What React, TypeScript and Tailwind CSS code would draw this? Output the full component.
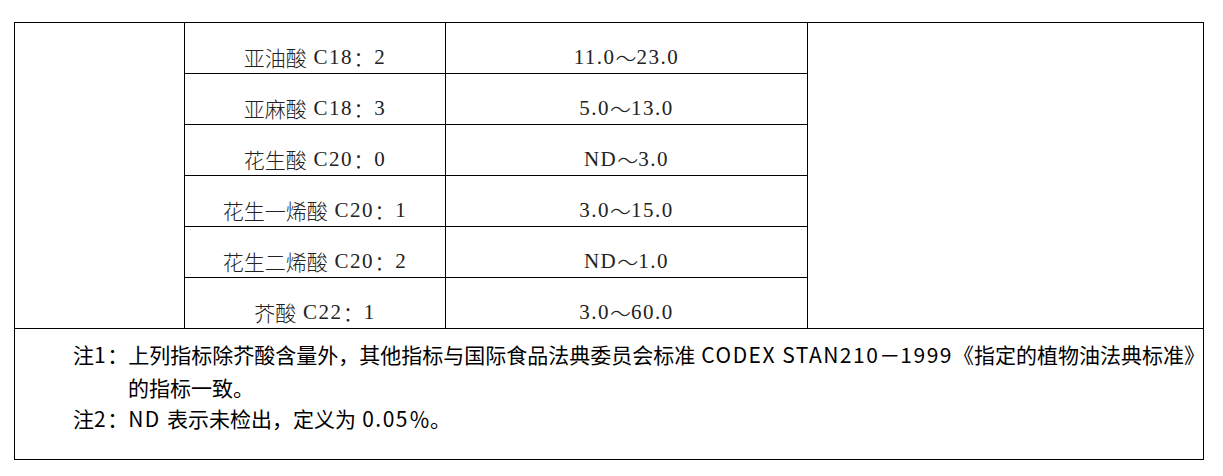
const rows = [
  { name: "亚油酸", code: "C18", n: "2", range: ["11.0", "23.0"] },
  { name: "亚麻酸", code: "C18", n: "3", range: ["5.0", "13.0"] },
  { name: "花生酸", code: "C20", n: "0", range: ["ND", "3.0"] },
  { name: "花生一烯酸", code: "C20", n: "1", range: ["3.0", "15.0"] },
  { name: "花生二烯酸", code: "C20", n: "2", range: ["ND", "1.0"] },
  { name: "芥酸", code: "C22", n: "1", range: ["3.0", "60.0"] },
];

const cjkSerif = "font-['Noto_Sans_CJK_SC',sans-serif] font-light";
const latin = "font-['Liberation_Serif',serif] tracking-[1.5px]";
// half-width latin in the notes is a bit wider than Noto's
const wide = "tracking-[1.5px]";

export default function App() {
  return (
    <div className="bg-white w-[1223px] h-[476px] pt-[22px] pl-[14px]">
      <div className="w-[1190px] border border-black text-[21px]">
        <div className="flex">
          <div className="w-[170px] border-r border-black" />
          <div className="flex flex-col">
            {rows.map((r, i) => (
              <div
                key={i}
                className={`flex text-[#222] ${
                  i < rows.length - 1 ? "h-[51px] border-b border-black" : "h-[50px]"
                }`}
              >
                <div className="w-[261px] border-r border-black flex items-center justify-center pt-[19px]">
                  <span className={cjkSerif}>{r.name}</span>
                  <span className={latin}>&nbsp;{r.code}</span>
                  <span className={cjkSerif}>：</span>
                  <span className={latin}>{r.n}</span>
                </div>
                <div className="w-[362px] border-r border-black flex items-center justify-center pt-[19px]">
                  <span className={latin}>{r.range[0]}</span>
                  <span className={cjkSerif}>～</span>
                  <span className={latin}>{r.range[1]}</span>
                </div>
              </div>
            ))}
          </div>
          <div className="w-[395px]" />
        </div>
        <div className="h-[131px] border-t border-black pt-[10px] leading-[31px] text-black font-['Noto_Sans_CJK_SC',sans-serif] whitespace-nowrap">
          <div className="pl-[58px]">
            注<span className={wide}>1</span>：上列指标除芥酸含量外，其他指标与国际食品法典委员会标准
            <span className={wide}> CODEX STAN210</span>－<span className={wide}>1999</span>
            《指定的植物油法典标准》
          </div>
          <div className="pl-[113px] pt-[2px]">的指标一致。</div>
          <div className="pl-[58px]">
            注<span className={wide}>2</span>：<span className={wide}>ND </span>表示未检出，定义为
            <span className={wide}> 0.05</span>％。
          </div>
        </div>
      </div>
    </div>
  );
}
